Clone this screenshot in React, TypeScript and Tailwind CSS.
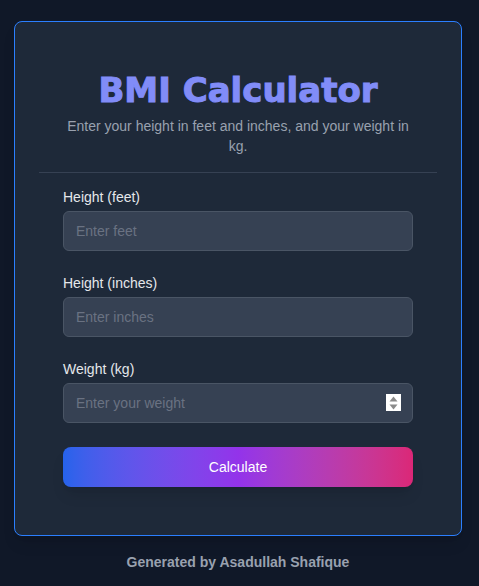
import React from "react";

const sans = { fontFamily: '"Liberation Sans", Arial, sans-serif' };

function Field({ label, placeholder, spinner }: { label: string; placeholder: string; spinner?: boolean }) {
  return (
    <div className="flex flex-col">
      <label className="text-sm leading-5 text-gray-200 mb-1">{label}</label>
      <div className="relative">
        <input
          type="text"
          placeholder={placeholder}
          className="w-full h-10 rounded-md border border-gray-600 bg-gray-700 px-3 text-sm text-gray-100 placeholder:text-gray-500 outline-none"
          style={sans}
        />
        {spinner && (
          <div className="absolute right-[12px] top-[11px] w-[15px] h-[17px] bg-white flex flex-col items-center justify-center gap-[2px]">
            <svg width="9" height="6" viewBox="0 0 9 6"><path d="M4.5 0.5 L8.5 5.5 L0.5 5.5 Z" fill="#8a8a8a" /></svg>
            <svg width="9" height="6" viewBox="0 0 9 6"><path d="M0.5 0.5 L8.5 0.5 L4.5 5.5 Z" fill="#8a8a8a" /></svg>
          </div>
        )}
      </div>
    </div>
  );
}

export default function App() {
  return (
    <div className="min-h-screen bg-gray-900 px-[14px] pt-[21px]" style={sans}>
      <div className="w-full max-w-[448px]">
        <div className="rounded-lg border border-blue-500 bg-gray-800 p-6 shadow-lg">
          <div className="pt-6 pb-4 border-b border-gray-700 text-center">
            <h1
              className="text-[34px] leading-10 font-bold text-[#818cf8] [-webkit-text-stroke:1px_#818cf8]"
              style={{ fontFamily: '"DejaVu Sans", sans-serif' }}
            >
              BMI Calculator
            </h1>
            <p className="mt-1.5 px-6 text-sm leading-5 text-gray-400">
              Enter your height in feet and inches, and your weight in kg.
            </p>
          </div>
          <div className="px-6 pt-[14px] pb-6 flex flex-col gap-[22px]">
            <Field label="Height (feet)" placeholder="Enter feet" />
            <Field label="Height (inches)" placeholder="Enter inches" />
            <Field label="Weight (kg)" placeholder="Enter your weight" spinner />
            <button
              className="mt-[2px] h-10 w-full rounded-lg bg-gradient-to-r from-[#2563eb] via-[#9333ea] to-[#db2777] text-sm text-white shadow-lg"
              style={sans}
            >
              Calculate
            </button>
          </div>
        </div>
        <p className="mt-4 text-center text-sm leading-5 font-bold text-gray-400">Generated by Asadullah Shafique</p>
      </div>
    </div>
  );
}
